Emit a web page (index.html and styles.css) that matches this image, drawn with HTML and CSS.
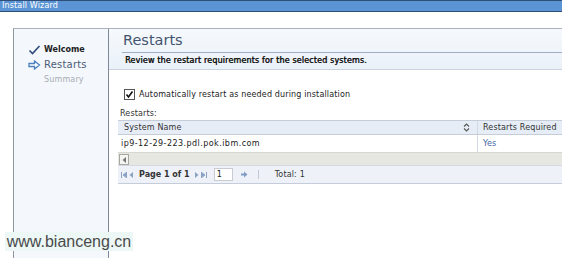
FILE: index.html
```html
<!DOCTYPE html>
<html lang="en">
<head>
<meta charset="UTF-8">
<title>Install Wizard</title>
<link rel="stylesheet" href="styles.css">
</head>
<body>

<div class="titlebar">Install Wizard</div>

<div class="frame">
  <div class="nav">
    <div class="step done">
      <svg class="ico" width="12" height="10" viewBox="0 0 12 10"><path d="M1 5.5 L4 8.5 L11 1" fill="none" stroke="#2d4a7a" stroke-width="1.6"/></svg>
      <span>Welcome</span>
    </div>
    <div class="step current">
      <svg class="ico" width="13" height="10" viewBox="0 0 13 10"><path d="M1 3.5 H6.5 V1 L11.5 5 L6.5 9 V6.5 H1 Z" fill="#fff" stroke="#4a7fc0" stroke-width="1.3"/></svg>
      <span>Restarts</span>
    </div>
    <div class="step todo"><span>Summary</span></div>
  </div>

  <div class="main">
    <div class="header">
      <h1>Restarts</h1>
      <p>Review the restart requirements for the selected systems.</p>
    </div>

    <div class="body">
      <label class="check">
        <span class="box"><svg width="9" height="9" viewBox="0 0 9 9"><path d="M1.5 4.5 L3.5 7 L7.5 1.5" fill="none" stroke="#111" stroke-width="1.6"/></svg></span>
        Automatically restart as needed during installation
      </label>

      <div class="caption">Restarts:</div>

      <div class="grid">
        <div class="row head">
          <div class="c1">System Name
            <svg class="sort" width="7" height="9" viewBox="0 0 7 9"><path d="M1 3.5 L3.5 1 L6 3.5 M1 5.5 L3.5 8 L6 5.5" fill="none" stroke="#555" stroke-width="1.1"/></svg>
          </div>
          <div class="c2">Restarts Required</div>
        </div>
        <div class="row data">
          <div class="c1 host">ip9-12-29-223.pdl.pok.ibm.com</div>
          <div class="c2 link">Yes</div>
        </div>
        <div class="scroll">
          <span class="sbtn"><svg width="5" height="6" viewBox="0 0 5 6"><path d="M4 0 L0.5 3 L4 6 Z" fill="#777"/></svg></span>
        </div>
        <div class="pager">
          <span class="pico">
            <svg width="6" height="6" viewBox="0 0 6 6"><path d="M0.5 0 V6 M6 0 L2 3 L6 6 Z" fill="#8aa2c4" stroke="#8aa2c4" stroke-width="1"/></svg>
            <svg width="4" height="6" viewBox="0 0 4 6"><path d="M4 0 L0.5 3 L4 6 Z" fill="#8aa2c4"/></svg>
          </span>
          <span class="ptext">Page 1 of 1</span>
          <span class="pico">
            <svg width="4" height="6" viewBox="0 0 4 6"><path d="M0 0 L3.5 3 L0 6 Z" fill="#8aa2c4"/></svg>
            <svg width="6" height="6" viewBox="0 0 6 6"><path d="M5.5 0 V6 M0 0 L4 3 L0 6 Z" fill="#8aa2c4" stroke="#8aa2c4" stroke-width="1"/></svg>
          </span>
          <span class="pinput">1</span>
          <svg class="go" width="7" height="7" viewBox="0 0 7 7"><path d="M0 2.5 H3 V0.5 L6.5 3.5 L3 6.5 V4.5 H0 Z" fill="#7f9cc4"/></svg>
          <span class="psep"></span>
          <span class="ptotal">Total: 1</span>
        </div>
      </div>
    </div>
  </div>
</div>

<div class="watermark">www.bianceng.cn</div>

</body>
</html>
```

FILE: styles.css
```css
body, html {
  margin: 0;
  height: 100%;
  overflow: hidden;
  background: #fff;
  font-family: 'DejaVu Sans', Verdana, sans-serif;
  font-size: 8px;
  letter-spacing: 0.15px;
  color: #222;
}

.titlebar {
  height: 10px;
  line-height: 10px;
  background: #5b94d4;
  border-top: 1px solid #2f4f78;
  border-bottom: 1px solid #2f4f78;
  color: #fff;
  font-size: 8px;
  padding-left: 2px;
}

.frame {
  display: flex;
  margin-top: 16px;
  margin-left: 13px;
  height: 240px;
  border-left: 1px solid #8f97a3;
  border-top: 1px solid #a9b1bd;
}

.nav {
  width: 94px;
  flex: none;
  background: #f4f7fb;
  border-right: 1px solid #7f8896;
  padding-top: 13px;
}

.step {
  display: flex;
  align-items: center;
  height: 15px;
  padding-left: 14px;
}

.step .ico {
  width: 13px;
  margin-right: 3px;
}

.step.done span {
  font-weight: bold;
  color: #222;
  letter-spacing: 0;
}

.step.current span {
  font-size: 10px;
  color: #4c5d78;
  letter-spacing: 0.2px;
}

.step.todo {
  padding-left: 30px;
  color: #a7acb4;
}

.main {
  flex: 1;
  min-width: 0;
}

.header {
  height: 40px;
  background: linear-gradient(#f6f9fd, #eaf1f8);
  border-bottom: 1px solid #c9d2de;
  padding-left: 13px;
}

.header h1 {
  margin: 0;
  padding: 3px 0 3px 1px;
  font-weight: normal;
  font-size: 14.5px;
  line-height: 17px;
  letter-spacing: 0;
  color: #43546f;
  border-bottom: 1px solid #9fb0c6;
}

.header p {
  margin: 0;
  padding: 3px 0 0 3px;
  font-size: 8px;
  letter-spacing: 0.15px;
  color: #111;
  text-shadow: 0.4px 0 0 #111;
}

.body {
  padding: 19px 0 0 9px;
}

.check {
  display: flex;
  align-items: center;
  padding-left: 6px;
  height: 11px;
  color: #222;
}

.box {
  width: 9px;
  height: 9px;
  border: 1px solid #555;
  background: #fff;
  margin-right: 4px;
  display: flex;
}

.caption {
  margin-top: 9px;
  padding-left: 2px;
  height: 11px;
  color: #333;
}

.grid {
  border-top: 1px solid #c4cdd9;
}

.row {
  display: flex;
}

.row.head {
  height: 13px;
  line-height: 13px;
  background: #e6edf6;
  border-bottom: 1px solid #c4cdd9;
  color: #333;
}

.row.data {
  height: 17px;
  line-height: 17px;
}

.c1 {
  width: 356px;
  flex: none;
  padding-left: 3px;
  border-right: 1px solid #d3d9e2;
  position: relative;
}

.row.head .c1 {
  padding-left: 6px;
  width: 353px;
}

.host {
  letter-spacing: 0.45px;
}

.sort {
  position: absolute;
  right: 7px;
  top: 2px;
}

.c2 {
  padding-left: 5px;
  white-space: nowrap;
}

.link {
  color: #3d64a3;
}

.scroll {
  height: 12px;
  background: #e7e7e1;
  border-top: 1px solid #d8d8d2;
}

.sbtn {
  display: flex;
  align-items: center;
  justify-content: center;
  width: 8px;
  height: 9px;
  margin: 1px 0 0 1px;
  border: 1px solid #a8a8a2;
  background: #f4f4f0;
}

.pager {
  display: flex;
  align-items: center;
  height: 17px;
  background: #eef2f8;
  border-top: 1px solid #d3d9e2;
  border-bottom: 1px solid #c4cdd9;
  padding-left: 3px;
}

.pico {
  display: flex;
  gap: 2px;
}

.ptext {
  font-weight: bold;
  letter-spacing: 0;
  color: #333;
  margin: 0 5px 0 6px;
}

.pinput {
  width: 15px;
  height: 11px;
  line-height: 11px;
  margin-left: 7px;
  padding-left: 2px;
  background: #fff;
  border: 1px solid #c8ccd2;
  color: #222;
}

.go {
  margin-left: 8px;
}

.psep {
  width: 1px;
  height: 9px;
  background: #c3c9d2;
  margin-left: 10px;
}

.ptotal {
  margin-left: 16px;
  color: #333;
}

.watermark {
  position: absolute;
  left: 5px;
  top: 232px;
  width: 128px;
  height: 19px;
  line-height: 19px;
  background: #ecf7f6;
  font-family: 'Liberation Sans', Arial, sans-serif;
  font-size: 16px;
  letter-spacing: 0;
  color: #4a4a4a;
  text-align: center;
}
```
